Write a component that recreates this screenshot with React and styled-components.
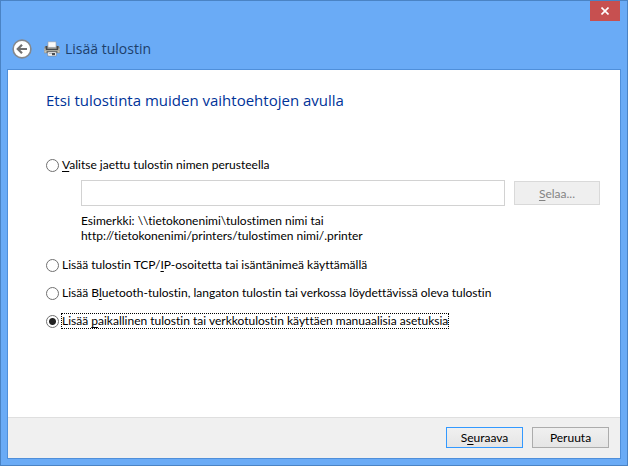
import React, { useState } from "react";
import styled, { createGlobalStyle } from "styled-components";

const App = () => {
  const [method, setMethod] = useState("local");
  const [path, setPath] = useState("");
  const pick = (e) => setMethod(e.target.value);

  return (
    <Window>
      <GlobalStyle />
      <TitleBar>
        <CloseButton type="button" aria-label="Sulje">
          <CloseIcon />
        </CloseButton>
      </TitleBar>
      <Header>
        <BackButton type="button" aria-label="Takaisin">
          <BackIcon />
        </BackButton>
        <PrinterIcon />
        <Title>Lisää tulostin</Title>
      </Header>
      <Panel>
        <Content>
          <Heading>Etsi tulostinta muiden vaihtoehtojen avulla</Heading>
          <Option>
            <Radio id="shared" value="shared" checked={method === "shared"} onChange={pick} />
            <OptionLabel htmlFor="shared">
              <u>V</u>alitse jaettu tulostin nimen perusteella
            </OptionLabel>
          </Option>
          <PathRow>
            <PathInput
              type="text"
              aria-label="Tulostimen nimi"
              disabled={method !== "shared"}
              value={path}
              onChange={(e) => setPath(e.target.value)}
            />
            <BrowseButton type="button" disabled={method !== "shared"}>
              <u>S</u>elaa...
            </BrowseButton>
          </PathRow>
          <Hint>
            Esimerkki: \\tietokonenimi\tulostimen nimi tai
            <br />
            http://tietokonenimi/printers/tulostimen nimi/.printer
          </Hint>
          <OptionList>
            <Option>
              <Radio id="tcp" value="tcp" checked={method === "tcp"} onChange={pick} />
              <OptionLabel htmlFor="tcp">
                Lisää tulostin TCP/<u>I</u>P-osoitetta tai isäntänimeä käyttämällä
              </OptionLabel>
            </Option>
            <Option>
              <Radio id="bluetooth" value="bluetooth" checked={method === "bluetooth"} onChange={pick} />
              <OptionLabel htmlFor="bluetooth">
                Lisää B<u>l</u>uetooth-tulostin, langaton tulostin tai verkossa löydettävissä oleva tulostin
              </OptionLabel>
            </Option>
            <Option>
              <Radio id="local" value="local" checked={method === "local"} onChange={pick} />
              <OptionLabel htmlFor="local" $focused={method === "local"}>
                Lisää <u>p</u>aikallinen tulostin tai verkkotulostin käyttäen manuaalisia asetuksia
              </OptionLabel>
            </Option>
          </OptionList>
        </Content>
        <Footer>
          <DialogButton type="button" $primary>
            S<u>e</u>uraava
          </DialogButton>
          <DialogButton type="button">Peruuta</DialogButton>
        </Footer>
      </Panel>
    </Window>
  );
};

export default App;

const CloseIcon = () => (
  <svg width="8" height="8" viewBox="0 0 8 8" aria-hidden="true">
    <path d="M0.5 0.5 L7.5 7.5 M7.5 0.5 L0.5 7.5" stroke="#fff" strokeWidth="1.6" />
  </svg>
);

const BackIcon = () => (
  <svg width="20" height="20" viewBox="0 0 20 20" aria-hidden="true">
    <circle cx="10" cy="10" r="8.9" fill="#fff" stroke="#85888c" strokeWidth="1.6" />
    <path d="M15 10 H6.5 M10 5.8 L5.8 10 L10 14.2" fill="none" stroke="#707070" strokeWidth="2.2" />
  </svg>
);

const PrinterIcon = () => (
  <svg width="16" height="16" viewBox="0 0 16 16" aria-hidden="true">
    <path d="M1 5 H3 V4.5 H13 V5 H15 L15.8 7 V12.3 H0.2 V7 Z" fill="#8f918d" />
    <path d="M0.6 7.6 H3 V9 H0.6 Z M13 7.6 H15.4 V9 H13 Z" fill="#e3e3d8" />
    <path d="M1.6 5 H3.4 V8 H12.6 V5 H14.4 V9.2 H1.6 Z" fill="#45484c" />
    <path d="M4 0.8 H12 V6.4 H4 Z" fill="#fafafa" stroke="#9a9ea6" strokeWidth="0.6" />
    <path d="M0.4 9.4 H15.6 V11.6 H0.4 Z" fill="#c4c4b8" />
    <path d="M2.6 10.2 H13.4 V12 H2.6 Z" fill="#55585a" />
    <path d="M3.8 11 H12.2 V15 H3.8 Z" fill="#fff" stroke="#7b7e82" strokeWidth="0.6" />
    <path d="M5 12 H8 V13.2 H5 Z" fill="#b4b8bc" />
    <path d="M8 12 H11 V14.2 H8 Z" fill="#4a4d50" />
  </svg>
);

const GlobalStyle = createGlobalStyle`
  * {
    box-sizing: border-box;
  }
  body {
    margin: 0;
    font-family: Lato, "Open Sans", sans-serif;
    font-size: 12px;
    font-variant-ligatures: none;
    line-height: 15px;
    color: #000;
  }
  button, input {
    font: inherit;
    font-variant-ligatures: none;
  }
  u {
    text-underline-offset: 2px;
  }
`;

const Window = styled.div`
  display: flex;
  flex-direction: column;
  min-height: 100vh;
  padding: 0 7px 7px;
  background: #6aabf6;
  border: 1px solid #4a83c4;
`;

const TitleBar = styled.div`
  display: flex;
  justify-content: flex-end;
  height: 36px;
`;

const CloseButton = styled.button`
  display: flex;
  align-items: center;
  justify-content: center;
  width: 30px;
  height: 20px;
  padding: 0;
  border: 0;
  background: #c75050;
`;

const Header = styled.header`
  display: flex;
  align-items: center;
  height: 24px;
  margin-bottom: 9px;
  padding-left: 4px;
`;

const BackButton = styled.button`
  display: flex;
  margin-right: 12px;
  padding: 0;
  border: 0;
  background: none;
`;

const Title = styled.h1`
  margin: 0 0 0 5px;
  font-family: "Open Sans", "Noto Sans", sans-serif;
  font-size: 14px;
  font-weight: 400;
  line-height: 20px;
  color: #1d3f6c;
`;

const Panel = styled.main`
  display: flex;
  flex: 1;
  flex-direction: column;
  background: #fff;
  outline: 1px solid #4f8fda;
`;

const Content = styled.section`
  flex: 1;
  padding: 20px 20px 0 38px;
`;

const Heading = styled.h2`
  margin: 0 0 47px;
  font-family: "Open Sans", "Noto Sans", sans-serif;
  font-size: 15px;
  font-weight: 400;
  line-height: 20px;
  color: #003399;
`;

const Option = styled.div`
  display: flex;
  align-items: center;
  gap: 2px;
  height: 16px;
`;

const OptionList = styled.div`
  display: grid;
  gap: 12px;
  margin-top: 14px;
`;

const Radio = styled.input.attrs({ type: "radio", name: "method" })`
  appearance: none;
  flex: none;
  width: 13px;
  height: 13px;
  margin: 0;
  border: 1px solid #707070;
  border-radius: 50%;
  background: #fff;

  &:checked {
    background: radial-gradient(circle, #212121 3px, #fff 4px);
  }
`;

const OptionLabel = styled.label`
  border: 1px dotted ${(props) => (props.$focused ? "#000" : "transparent")};
  line-height: 14px;
  white-space: nowrap;
`;

const PathRow = styled.div`
  display: flex;
  align-items: center;
  gap: 9px;
  margin: 7px 0;
  padding-left: 35px;
`;

const PathInput = styled.input`
  flex: 1;
  min-width: 0;
  height: 26px;
  padding: 0 4px;
  border: 1px solid #d2d2d2;
  background: #fff;
`;

const Hint = styled.p`
  margin: 0;
  padding-left: 35px;
`;

const Footer = styled.footer`
  display: flex;
  justify-content: flex-end;
  gap: 9px;
  padding: 9px 11px 10px;
  background: #f0f0f0;
  border-top: 1px solid #dfdfdf;
`;

const DialogButton = styled.button`
  width: 77px;
  height: 21px;
  padding: 0;
  border: 1px solid ${(props) => (props.$primary ? "#3399ff" : "#acacac")};
  background: linear-gradient(#f0f0f0, #e5e5e5);
  color: #000;
  line-height: 17px;
`;

const BrowseButton = styled(DialogButton)`
  width: 86px;
  height: 24px;

  &:disabled {
    border-color: #d9d9d9;
    background: #efefef;
    color: #838383;
  }
`;
